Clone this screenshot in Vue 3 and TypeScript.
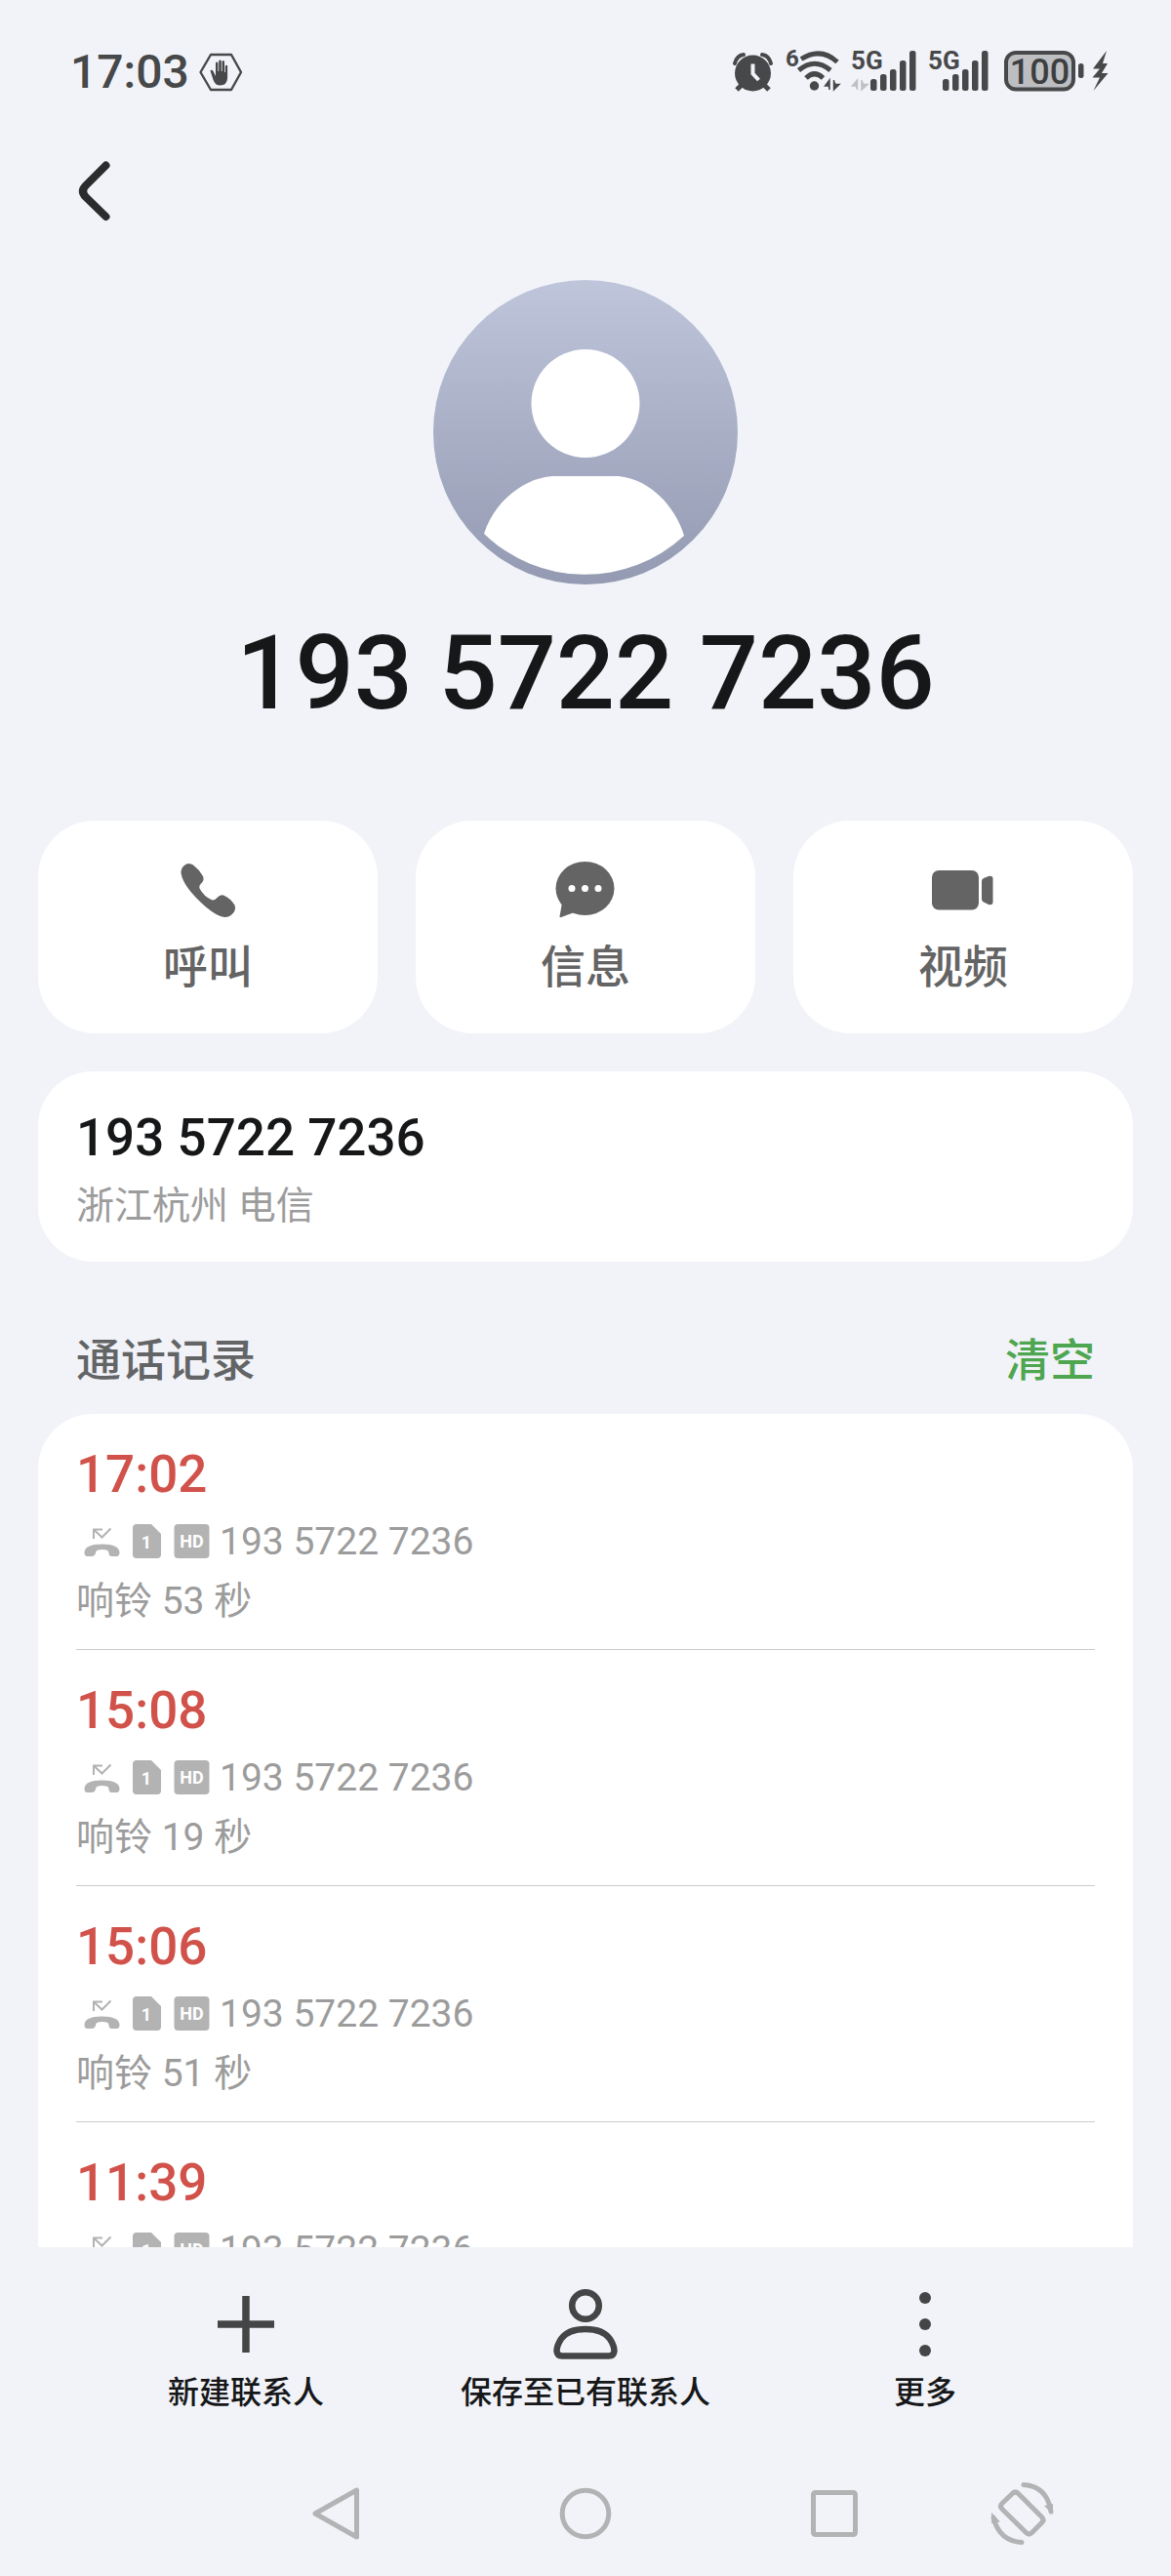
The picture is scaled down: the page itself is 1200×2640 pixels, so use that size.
<script setup lang="ts">
interface CallRecord {
  time: string
  number: string
  detail: string
}

const phoneNumber = '193 5722 7236'

const calls: CallRecord[] = [
  { time: '17:02', number: phoneNumber, detail: '响铃 53 秒' },
  { time: '15:08', number: phoneNumber, detail: '响铃 19 秒' },
  { time: '15:06', number: phoneNumber, detail: '响铃 51 秒' },
  { time: '11:39', number: phoneNumber, detail: '响铃 50 秒' },
]

const barTops: number[] = [81, 76, 71, 62, 52]
</script>

<template>
  <div class="screen">
    <header class="status">
      <span class="clock">17:03</span>
      <svg class="shield" width="48" height="44" viewBox="202 52 48 44">
        <path d="M216 56H237L247 74 237 92H216L205.500 74Z" fill="none" stroke="#474849" stroke-width="2.400" stroke-linejoin="round" />
        <path d="M215.500 72.500q1.500-1.500 3 .5l2.500 5V64.500q1.200-1.800 2.400 0V73h.8V62.500q1.300-1.800 2.600 0V73h.8V63q1.200-1.800 2.400 0V74h.8V67.500q1.200-1.600 2.300 0V80q-.4 7.500-7.500 7.500-5.200 0-7-5.500Z" fill="#474849" />
      </svg>
      <div class="indicators">
        <svg width="46" height="44" viewBox="748 52 46 44" fill="#474849">
          <circle cx="771.500" cy="75" r="18.500" />
          <path d="M753 65q2-8 9-9M790 65q-2-8-9-9" fill="none" stroke="#474849" stroke-width="4" stroke-linecap="round" />
          <path d="M760 87l-5 5M783 87l5 5" stroke="#474849" stroke-width="5" />
          <path d="M771.500 65.500V75.500L777.500 82" fill="none" stroke="#f1f3f8" stroke-width="4" />
        </svg>
        <svg width="58" height="44" viewBox="804 52 58 44" fill="#474849">
          <text x="805" y="68" font-size="24" font-weight="700">6</text>
          <g fill="none" stroke="#474849" stroke-width="5">
            <path d="M821 60.500Q841 48 858 63.500" />
            <path d="M818.500 72Q835 58.500 851 72" />
            <path d="M826 80Q834.500 71.500 843.500 80" />
          </g>
          <circle cx="834.500" cy="88" r="4.700" />
          <path d="M850 92V82L845.500 88H848M854.500 82V92L860 86.500H857" stroke="#474849" stroke-width="1.500" />
        </svg>
        <svg width="68" height="44" viewBox="872 52 68 44" fill="#474849">
          <text x="872" y="71" font-size="26" font-weight="700">5G</text>
          <path d="M878.500 92V82L873.500 88H876M883 82V92L889 86.500H886" fill="#bfc0c3" stroke="#bfc0c3" stroke-width="1.500" />
          <rect v-for="(top, i) in barTops" :key="i" :x="892 + i * 10" :y="top" width="6.500" :height="93 - top" rx="2.500" />
        </svg>
        <svg width="64" height="44" viewBox="950 52 64 44" fill="#474849">
          <text x="951" y="71" font-size="26" font-weight="700">5G</text>
          <rect v-for="(top, i) in barTops" :key="i" :x="966 + i * 10" :y="top" width="6.500" :height="93 - top" rx="2.500" />
        </svg>
        <svg width="112" height="44" viewBox="1024 52 112 44" fill="#474849">
          <rect x="1031" y="54" width="69" height="37.500" rx="10" fill="#bdbec1" stroke="#474849" stroke-width="4" />
          <text x="1065.500" y="86" font-size="36" font-weight="500" text-anchor="middle" fill="#3d3e3f">100</text>
          <rect x="1105" y="65" width="5.500" height="15" rx="2.500" />
          <path d="M1134 52L1120 70.500H1127L1119.500 79.500H1127L1120.500 93 1135.500 75H1129L1135 65H1130Z" />
        </svg>
      </div>
    </header>

    <nav class="topbar">
      <button class="plain back" type="button" aria-label="返回">
        <svg width="60" height="72" viewBox="72 160 60 72" fill="none" stroke="#2b2c2d" stroke-width="8" stroke-linecap="round" stroke-linejoin="round">
          <path d="M108.500 169.500L88 190Q82 196 88 202L108.500 222" />
        </svg>
      </button>
    </nav>

    <section class="profile">
      <svg class="avatar" width="312" height="312" viewBox="0 0 312 312">
        <defs>
          <linearGradient id="avatarFill" x1="0" y1="0" x2="0" y2="1">
            <stop offset="0" stop-color="#bfc5db" />
            <stop offset="1" stop-color="#939ab1" />
          </linearGradient>
        </defs>
        <circle cx="156" cy="156" r="156" fill="url(#avatarFill)" />
        <circle cx="156" cy="126.500" r="55.500" fill="#fff" />
        <path d="M122 201H190C222 204 248 232 257 262A149 149 0 0 1 52 260C62 228 92 203 122 201Z" fill="#fff" />
      </svg>
      <h1 class="headline">{{ phoneNumber }}</h1>
    </section>

    <section class="actions">
      <button class="plain action" type="button">
        <svg width="64" height="64" viewBox="180 880 64 64" fill="#646464">
          <path d="M190 885.500Q193.500 884 197 886.500Q203 891 207 898Q208.500 901.500 206 904.500Q202.500 907.500 203.500 910.500Q208 919 216.500 922.500Q219.500 922.500 221.500 920Q224.500 916.500 228 917.500Q235 920.500 239.500 927.500Q241 931 239 934.500Q235 940 229 940Q222 939.500 210 929.500Q187 909.500 184.500 895Q184 888.500 190 885.500Z" />
        </svg>
        <span>呼叫</span>
      </button>
      <button class="plain action" type="button">
        <svg width="64" height="64" viewBox="568 880 64 64">
          <ellipse cx="599.500" cy="910.500" rx="30" ry="27.500" fill="#646464" />
          <path d="M576 925L573.500 939.500Q573.500 940.500 575 940L590 934.500Z" fill="#646464" />
          <g fill="#fff">
            <circle cx="586" cy="910.500" r="3.500" />
            <circle cx="599.500" cy="910.500" r="3.500" />
            <circle cx="613" cy="910.500" r="3.500" />
          </g>
        </svg>
        <span>信息</span>
      </button>
      <button class="plain action" type="button">
        <svg width="64" height="64" viewBox="955 880 64 64" fill="#646464">
          <rect x="955" y="892" width="48" height="40.500" rx="7" />
          <path d="M1006 903Q1006 901 1008 900L1013 898Q1017.500 897 1017.500 900.500V924.500Q1017.500 928 1013 927L1008 924.500Q1006 923.500 1006 921.500Z" />
        </svg>
        <span>视频</span>
      </button>
    </section>

    <section class="card">
      <div class="number">{{ phoneNumber }}</div>
      <div class="detail">浙江杭州 电信</div>
    </section>

    <div class="section-head">
      <h2 class="section-title">通话记录</h2>
      <button class="plain clear" type="button">清空</button>
    </div>

    <ul class="history">
      <li v-for="call in calls" :key="call.time" class="call">
        <div class="time">{{ call.time }}</div>
        <div class="line">
          <svg width="131" height="36" viewBox="85 1561 131 36" fill="#b3b3b3">
            <path d="M96 1576V1566.500H105M96.500 1567L104.500 1574.500 113.500 1565.500" fill="none" stroke="#b3b3b3" stroke-width="2" />
            <path d="M86.500 1590Q87 1581.500 104.500 1581.500Q122 1581.500 122.500 1590Q122.500 1594 119.500 1594L114 1594Q111.500 1593.500 111.500 1590.500Q111.500 1588 109 1587.500Q104.500 1586.500 100.500 1587.500Q98 1588 98 1590.500Q97.500 1593.500 94.500 1594L89.500 1594Q86.500 1594 86.500 1590Z" />
            <path d="M140 1561H155L165 1571V1592Q165 1596 161 1596H140Q136 1596 136 1592V1565Q136 1561 140 1561Z" />
            <rect x="178.500" y="1561" width="36" height="35" rx="4" />
            <g fill="#fff" font-weight="700" text-anchor="middle">
              <text x="150" y="1586" font-size="18">1</text>
              <text x="196.500" y="1585" font-size="18">HD</text>
            </g>
          </svg>
          <span>{{ call.number }}</span>
        </div>
        <div class="detail">{{ call.detail }}</div>
      </li>
    </ul>

    <footer class="tools">
      <button class="plain tool" type="button">
        <svg width="72" height="72" viewBox="0 0 72 72" stroke="#444546" stroke-width="7.500" stroke-linecap="butt">
          <path d="M36 7V65M7 36H65" />
        </svg>
        <span>新建联系人</span>
      </button>
      <button class="plain tool" type="button">
        <svg width="72" height="72" viewBox="0 0 72 72" fill="none" stroke="#444546" stroke-width="6.500" stroke-linejoin="round">
          <circle cx="36" cy="17" r="13.800" />
          <path d="M36 41Q18 41 11 51Q6.500 58 6.500 63.500Q7 68.500 12 68.500H60Q65 68.500 65.500 63.500Q65.500 58 61 51Q54 41 36 41Z" />
        </svg>
        <span>保存至已有联系人</span>
      </button>
      <button class="plain tool" type="button">
        <svg width="72" height="72" viewBox="0 0 72 72" fill="#444546">
          <circle cx="36" cy="9" r="6" />
          <circle cx="36" cy="36" r="6" />
          <circle cx="36" cy="63" r="6" />
        </svg>
        <span>更多</span>
      </button>
    </footer>

    <nav class="sysnav">
      <button class="plain" type="button" aria-label="后退">
        <svg width="68" height="68" viewBox="0 0 68 68"><path d="M54.500 10V58L12 34Z" /></svg>
      </button>
      <button class="plain" type="button" aria-label="主页">
        <svg width="68" height="68" viewBox="0 0 68 68"><circle cx="34" cy="34" r="23.800" /></svg>
      </button>
      <button class="plain" type="button" aria-label="最近任务">
        <svg width="68" height="68" viewBox="0 0 68 68"><rect x="12.500" y="12.500" width="43" height="43" rx="2" /></svg>
      </button>
      <button class="plain" type="button" aria-label="旋转屏幕">
        <svg width="68" height="68" viewBox="0 0 68 68">
          <path d="M24.500 13.500Q27.500 10.500 30.500 13.500L54.500 37.500Q57.500 40.500 54.500 43.500L44.500 53.500Q41.500 56.500 38.500 53.500L14 29.500Q11 26.500 14 23.500Z" />
          <path d="M36 4.500Q60 6 64 32M34 63.500Q11 62 5 38" stroke-linecap="round" />
          <path d="M57 26L66 35V24ZM3 33V44L12 42.500Z" class="tip" />
        </svg>
      </button>
    </nav>
  </div>
</template>

<style>
body {
  margin: 0;
  background: #f1f3f8;
}
</style>

<style scoped>
.screen {
  display: flex;
  flex-direction: column;
  height: 100vh;
  background: #f1f3f8;
  color: #161718;
  font-family: Roboto, "Noto Sans CJK SC", sans-serif;
}

svg {
  display: block;
  flex: none;
}

.plain {
  margin: 0;
  padding: 0;
  border: 0;
  background: none;
  color: inherit;
  font: inherit;
  cursor: pointer;
}

.status {
  display: flex;
  align-items: center;
  height: 56px;
  padding: 46px 64px 0 72px;
}

.clock {
  font-size: 48px;
  font-weight: 500;
  line-height: 56px;
  color: #474849;
}

.shield {
  margin-left: 8px;
}

.indicators {
  display: flex;
  gap: 10px;
  margin-left: auto;
}

.indicators svg {
  overflow: visible;
}

.topbar {
  padding: 58px 72px 0;
}

.back {
  display: block;
}

.profile {
  display: flex;
  flex-direction: column;
  align-items: center;
  gap: 31px;
  margin-top: 55px;
}

.headline {
  margin: 0;
  font-size: 106px;
  font-weight: 500;
  line-height: 120px;
}

.actions {
  display: grid;
  grid-template-columns: repeat(3, 1fr);
  gap: 39px;
  margin: 91px 39px 0;
}

.action {
  display: flex;
  flex-direction: column;
  align-items: center;
  gap: 19px;
  padding: 39px 0 40px;
  border-radius: 58px;
  background: #fff;
  color: #646464;
  font-size: 46px;
  font-weight: 500;
  line-height: 56px;
}

.card {
  display: flex;
  flex-direction: column;
  gap: 14px;
  margin: 39px 39px 0;
  padding: 37px 39px 32px;
  border-radius: 56px;
  background: #fff;
}

.number,
.time {
  font-size: 53px;
  font-weight: 500;
  line-height: 62px;
}

.time {
  color: #d1524a;
}

.detail {
  font-size: 39px;
  line-height: 50px;
  color: #9c9c9c;
}

.section-head {
  display: flex;
  justify-content: space-between;
  margin: 73px 78px 27px;
  font-size: 46px;
  font-weight: 500;
  line-height: 56px;
}

.section-title {
  margin: 0;
  font: inherit;
  color: #636466;
}

.clear {
  color: #4fa650;
}

.history {
  flex: 1;
  min-height: 0;
  margin: 0 39px;
  padding: 0 39px;
  border-radius: 56px 56px 0 0;
  background: #fff;
  list-style: none;
  overflow-y: auto;
  scrollbar-width: none;
}

.call {
  padding: 31px 0 24px;
  border-bottom: 1px solid #cbcbcb;
}

.line {
  display: flex;
  align-items: center;
  gap: 9px;
  margin: 13px 0 11px 7px;
  font-size: 39px;
  line-height: 50px;
  color: #9c9c9c;
}

.tools {
  display: grid;
  grid-template-columns: repeat(3, 1fr);
  padding: 43px 78px 40px;
}

.tool {
  display: flex;
  flex-direction: column;
  align-items: center;
  gap: 14px;
  font-size: 32px;
  font-weight: 500;
  line-height: 40px;
}

.sysnav {
  display: grid;
  grid-template-columns: 255fr 255fr 255fr 129fr;
  height: 128px;
  padding: 0 7.400% 0 18.100%;
}

.sysnav button {
  display: flex;
  align-items: center;
  justify-content: center;
}

.sysnav svg {
  fill: none;
  stroke: #b2b3b4;
  stroke-width: 5;
  stroke-linejoin: round;
}

.sysnav .tip {
  fill: #b2b3b4;
  stroke: none;
}
</style>
